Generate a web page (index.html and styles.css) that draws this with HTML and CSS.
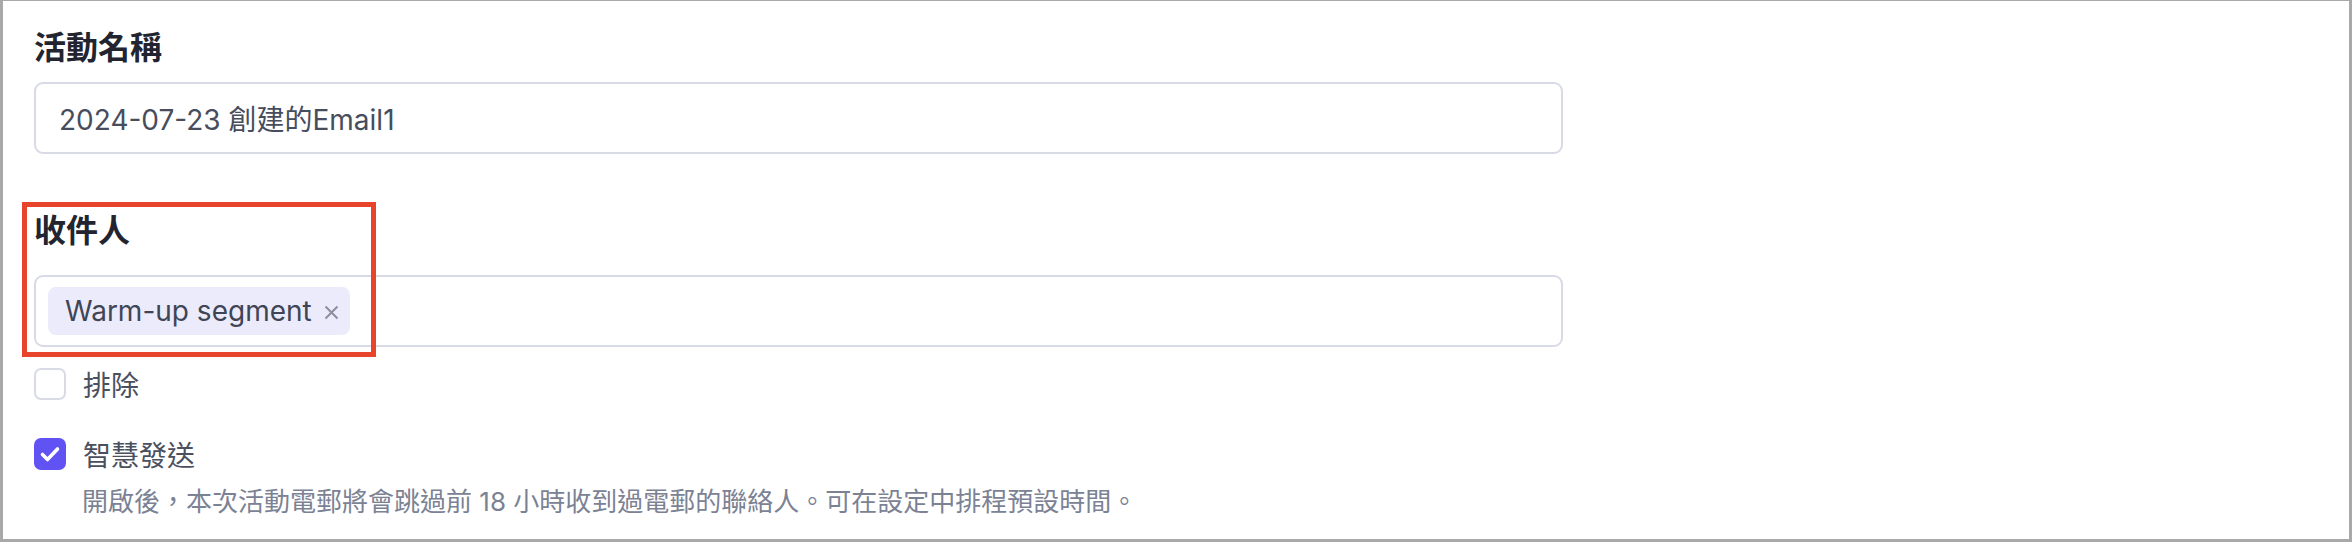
FILE: index.html
```html
<!DOCTYPE html>
<html lang="zh-Hant">
<head>
  <meta charset="UTF-8" />
  <title>活動設定</title>
  <link rel="stylesheet" href="styles.css">
</head>
<body>
  <div class="frame">
    <div class="form">

      <div class="field">
        <div class="field-label">活動名稱</div>
        <input class="text-input" type="text" value="2024-07-23 創建的Email1" aria-label="活動名稱" />
      </div>

      <div class="field field-recipients">
        <div class="field-label">收件人</div>
        <div class="tag-input">
          <span class="tag">
            Warm-up segment
            <svg class="tag-close" width="15" height="15" viewBox="0 0 15 15" aria-hidden="true">
              <path d="M1.5 1.5l12 12M13.5 1.5l-12 12" stroke="#8b8f9b" stroke-width="2" fill="none" />
            </svg>
          </span>
        </div>
        <div class="highlight"></div>
      </div>

      <label class="check-row check-exclude">
        <span class="checkbox"></span>
        <span class="check-text">排除</span>
      </label>

      <label class="check-row check-smart">
        <span class="checkbox checked">
          <svg width="32" height="32" viewBox="0 0 32 32" aria-hidden="true">
            <path d="M8.5 16.5l5 5 10-10.5" stroke="#fff" stroke-width="3.6" fill="none" stroke-linecap="round" stroke-linejoin="round" />
          </svg>
        </span>
        <span class="check-text">智慧發送</span>
      </label>
      <p class="hint">開啟後，本次活動電郵將會跳過前 18 小時收到過電郵的聯絡人。可在設定中排程預設時間。</p>

    </div>
  </div>
</body>
</html>
```

FILE: styles.css
```css
* {
  box-sizing: border-box;
}

body {
  margin: 0;
  background: #fff;
  font-family: "Inter", "Noto Sans CJK TC", sans-serif;
}

.frame {
  width: 2352px;
  height: 542px;
  border-style: solid;
  border-color: #a9a9a9;
  border-width: 1px 3px 3px 3px;
  padding: 23px 0 0 31px;
  overflow: hidden;
}

.form {
  width: 1529px;
}

.field-label {
  font-size: 32px;
  line-height: 48px;
  font-weight: 700;
  color: #22252f;
}

.text-input {
  display: block;
  width: 100%;
  height: 72px;
  margin-top: 10px;
  padding: 0 23px;
  border: 2px solid #d8dae6;
  border-radius: 9px;
  font-family: inherit;
  font-size: 28px;
  color: #474d5c;
  outline: none;
}

.field-recipients {
  position: relative;
  margin-top: 53px;
}

.tag-input {
  display: flex;
  align-items: center;
  height: 72px;
  margin-top: 20px;
  padding: 0 12px;
  border: 2px solid #d8dae6;
  border-radius: 9px;
}

.tag {
  display: inline-flex;
  align-items: center;
  gap: 12px;
  height: 48px;
  padding: 0 11px 0 17px;
  border-radius: 8px;
  background: #ecebfc;
  font-size: 28px;
  color: #3f4555;
}

.tag-close {
  display: block;
  margin-top: 2px;
}

.highlight {
  position: absolute;
  left: -12px;
  top: -5px;
  width: 354px;
  height: 155px;
  border: 5px solid #e8432b;
  pointer-events: none;
}

.check-row {
  display: flex;
  align-items: center;
  gap: 17px;
  height: 40px;
}

.check-exclude {
  margin-top: 17px;
}

.check-smart {
  margin-top: 30px;
}

.checkbox {
  width: 32px;
  height: 32px;
  border: 2px solid #d8dae6;
  border-radius: 7px;
  background: #fff;
}

.checkbox.checked {
  border: none;
  background: #6152f3;
}

.checkbox svg {
  display: block;
}

.check-text {
  font-size: 28px;
  color: #4a505e;
}

.hint {
  margin: 10px 0 0 0;
  padding-left: 48px;
  font-size: 26px;
  line-height: 36px;
  color: #7b8294;
}
```
